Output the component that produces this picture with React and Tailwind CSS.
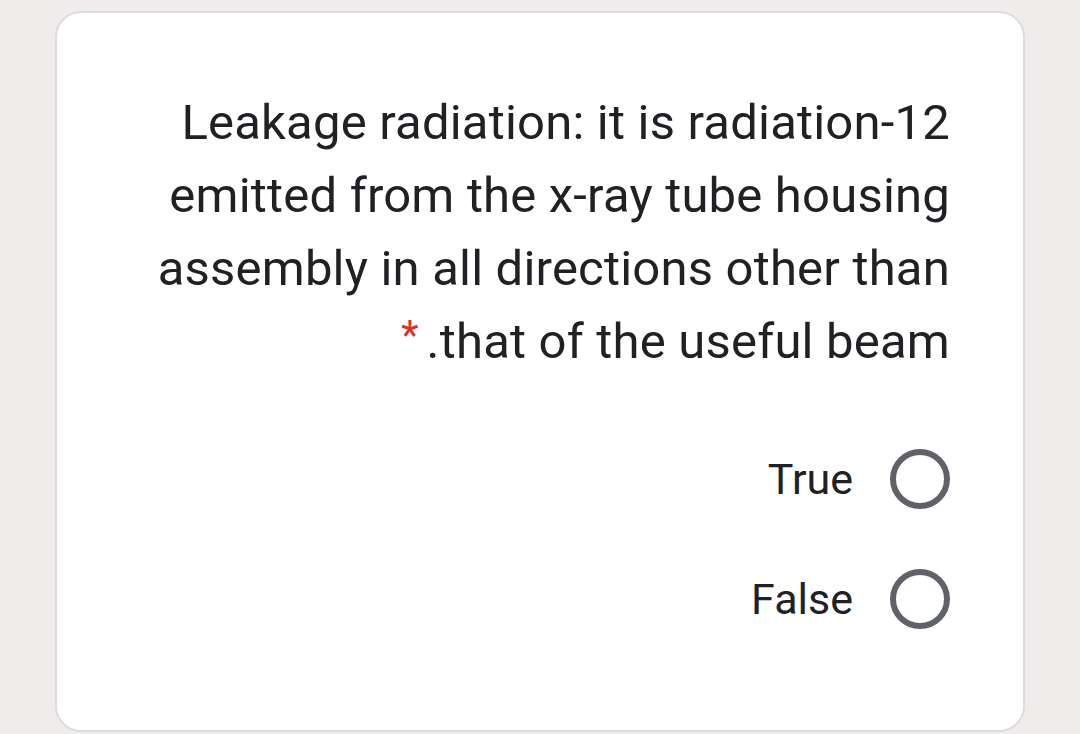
import React, { useState } from 'react';

const options = ['True', 'False'];

const App = () => {
    const [picked, setPicked] = useState(null);

    return (
        <div className="min-h-screen bg-[#efeceb] px-[55px] pt-[11px] overflow-hidden" style={{ fontFamily: 'Roboto, "Noto Sans", sans-serif' }}>
            <div className="h-[721px] bg-white border-2 border-[#dcdcdf] rounded-[26px] pr-[73px] pt-[73px]">
                <div className="text-right text-[#202124] text-[49px] leading-[73px] tracking-[0.2px]">
                    <p>Leakage radiation: it is radiation-12</p>
                    <p>emitted from the x-ray tube housing</p>
                    <p>assembly in all directions other than</p>
                    <p>
                        <span className="text-[#d93025] text-[40px] align-top relative top-[-6px] mr-[8px]">*</span>
                        .that of the useful beam
                    </p>
                </div>

                <div className="mt-[71px] flex flex-col items-end gap-[60px]">
                    {options.map((opt) => (
                        <label key={opt} className="flex items-center gap-[37px] cursor-pointer" onClick={() => setPicked(opt)}>
                            <span className="text-[43px] leading-[60px] text-[#202124]">{opt}</span>
                            <span className="w-[60px] h-[60px] rounded-full border-[6px] border-[#5f6368] flex items-center justify-center">
                                {picked === opt && <span className="w-[30px] h-[30px] rounded-full bg-[#5f6368]" />}
                            </span>
                        </label>
                    ))}
                </div>
            </div>
        </div>
    );
};

export default App;
